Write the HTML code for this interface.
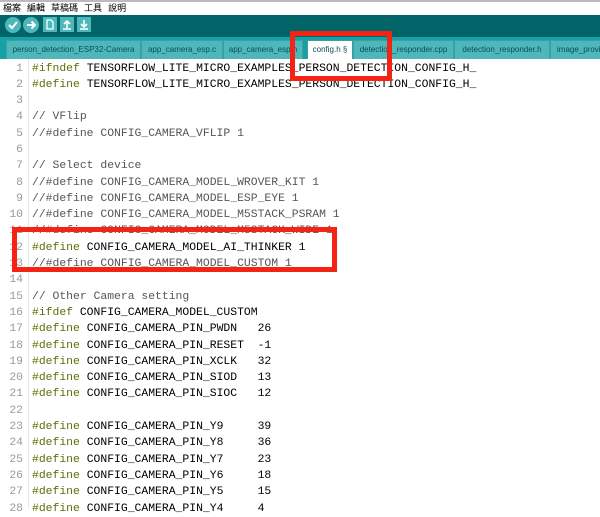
<!DOCTYPE html>
<html><head><meta charset="utf-8"><style>
*{margin:0;padding:0;box-sizing:border-box}
body{width:600px;height:508px;overflow:hidden;background:#fff;position:relative;font-family:"Liberation Sans","Noto Sans CJK TC",sans-serif}
#menu{position:absolute;top:0;left:0;width:600px;height:15px;background:#fff;border-top:2px solid #bbb;font-size:9px;line-height:12px;padding-left:3px;color:#000}
#menu span{margin-right:6px}
#tool{position:absolute;top:15px;left:0;width:600px;height:22px;background:#006468}
.c{position:absolute;top:2px;width:16px;height:16px;border-radius:50%;background:#4db7bb}
.s{position:absolute;top:2px;width:14px;height:15px;background:#4db7bb}
#tabs{position:absolute;top:37px;left:0;width:600px;height:22px;background:#17a1a5}
.t{position:absolute;top:3px;height:19px;background:#4db7bb;border:1px solid #3aa0a4;border-bottom:none;font-size:8px;color:#0b4f52;text-align:center;line-height:18px;white-space:nowrap;overflow:hidden}
.t.a{background:#fff;color:#0b4f52}
#ed{position:absolute;top:59px;left:0;width:600px;height:449px;background:#fff}
#gut{position:absolute;left:28px;top:59px;width:1px;height:449px;background:#e6e6e6}
#code{position:absolute;left:0;top:60.5px}
.l{height:16.3px;font-family:"Liberation Mono",monospace;font-size:11.4px;line-height:16.3px;white-space:pre;color:#000}
.n{display:inline-block;width:23px;text-align:right;color:#999;margin-right:9px}
.k{color:#5e6d03}.cm{color:#555}
.r{position:absolute;border:5px solid #f42314}
</style></head><body>
<div id="menu"><span>檔案</span><span>編輯</span><span>草稿碼</span><span>工具</span><span>說明</span></div>
<div id="tool">
<div class="c" style="left:5px"><svg width="16" height="16"><path d="M4 8 L7 11 L12 5" stroke="#fff" stroke-width="2" fill="none"/></svg></div>
<div class="c" style="left:23px"><svg width="16" height="16"><path d="M4 8 H12 M8.5 4.5 L12 8 L8.5 11.5" stroke="#fff" stroke-width="2" fill="none"/></svg></div>
<div class="s" style="left:43px"><svg width="14" height="15"><path d="M4 3 H8 L10 5 V12 H4 Z" stroke="#fff" stroke-width="1.3" fill="none"/></svg></div>
<div class="s" style="left:60px"><svg width="14" height="15"><path d="M7 11 V5 M4 7 L7 4 L10 7 M3 12 H11" stroke="#fff" stroke-width="1.6" fill="none"/></svg></div>
<div class="s" style="left:77px"><svg width="14" height="15"><path d="M7 3 V9 M4 7 L7 10 L10 7 M3 12 H11" stroke="#fff" stroke-width="1.6" fill="none"/></svg></div>
</div>
<div id="tabs">
<div class="t" style="left:6px;width:135px">person_detection_ESP32-Camera</div>
<div class="t" style="left:141px;width:82px">app_camera_esp.c</div>
<div class="t" style="left:223px;width:80px">app_camera_esp.h</div>
<div class="t a" style="left:307px;width:46px">config.h §</div>
<div class="t" style="left:353px;width:101px">detection_responder.cpp</div>
<div class="t" style="left:454px;width:96px">detection_responder.h</div>
<div class="t" style="left:550px;width:60px;text-align:left;padding-left:6px">image_provider.h</div>
</div>
<div id="ed"></div><div id="gut"></div>
<div id="code">
<div class="l"><span class="n">1</span><span class="k">#ifndef</span> TENSORFLOW_LITE_MICRO_EXAMPLES_PERSON_DETECTION_CONFIG_H_</div>
<div class="l"><span class="n">2</span><span class="k">#define</span> TENSORFLOW_LITE_MICRO_EXAMPLES_PERSON_DETECTION_CONFIG_H_</div>
<div class="l"><span class="n">3</span></div>
<div class="l"><span class="n">4</span><span class="cm">// VFlip</span></div>
<div class="l"><span class="n">5</span><span class="cm">//#define CONFIG_CAMERA_VFLIP 1</span></div>
<div class="l"><span class="n">6</span></div>
<div class="l"><span class="n">7</span><span class="cm">// Select device</span></div>
<div class="l"><span class="n">8</span><span class="cm">//#define CONFIG_CAMERA_MODEL_WROVER_KIT 1</span></div>
<div class="l"><span class="n">9</span><span class="cm">//#define CONFIG_CAMERA_MODEL_ESP_EYE 1</span></div>
<div class="l"><span class="n">10</span><span class="cm">//#define CONFIG_CAMERA_MODEL_M5STACK_PSRAM 1</span></div>
<div class="l"><span class="n">11</span><span class="cm">//#define CONFIG_CAMERA_MODEL_M5STACK_WIDE 1</span></div>
<div class="l"><span class="n">12</span><span class="k">#define</span> CONFIG_CAMERA_MODEL_AI_THINKER 1</div>
<div class="l"><span class="n">13</span><span class="cm">//#define CONFIG_CAMERA_MODEL_CUSTOM 1</span></div>
<div class="l"><span class="n">14</span></div>
<div class="l"><span class="n">15</span><span class="cm">// Other Camera setting</span></div>
<div class="l"><span class="n">16</span><span class="k">#ifdef</span> CONFIG_CAMERA_MODEL_CUSTOM</div>
<div class="l"><span class="n">17</span><span class="k">#define</span> CONFIG_CAMERA_PIN_PWDN   26</div>
<div class="l"><span class="n">18</span><span class="k">#define</span> CONFIG_CAMERA_PIN_RESET  -1</div>
<div class="l"><span class="n">19</span><span class="k">#define</span> CONFIG_CAMERA_PIN_XCLK   32</div>
<div class="l"><span class="n">20</span><span class="k">#define</span> CONFIG_CAMERA_PIN_SIOD   13</div>
<div class="l"><span class="n">21</span><span class="k">#define</span> CONFIG_CAMERA_PIN_SIOC   12</div>
<div class="l"><span class="n">22</span></div>
<div class="l"><span class="n">23</span><span class="k">#define</span> CONFIG_CAMERA_PIN_Y9     39</div>
<div class="l"><span class="n">24</span><span class="k">#define</span> CONFIG_CAMERA_PIN_Y8     36</div>
<div class="l"><span class="n">25</span><span class="k">#define</span> CONFIG_CAMERA_PIN_Y7     23</div>
<div class="l"><span class="n">26</span><span class="k">#define</span> CONFIG_CAMERA_PIN_Y6     18</div>
<div class="l"><span class="n">27</span><span class="k">#define</span> CONFIG_CAMERA_PIN_Y5     15</div>
<div class="l"><span class="n">28</span><span class="k">#define</span> CONFIG_CAMERA_PIN_Y4     4</div>
</div>
<div class="r" style="left:290px;top:31px;width:102px;height:50px"></div>
<div class="r" style="left:12px;top:227px;width:325px;height:45px"></div>
</body></html>
